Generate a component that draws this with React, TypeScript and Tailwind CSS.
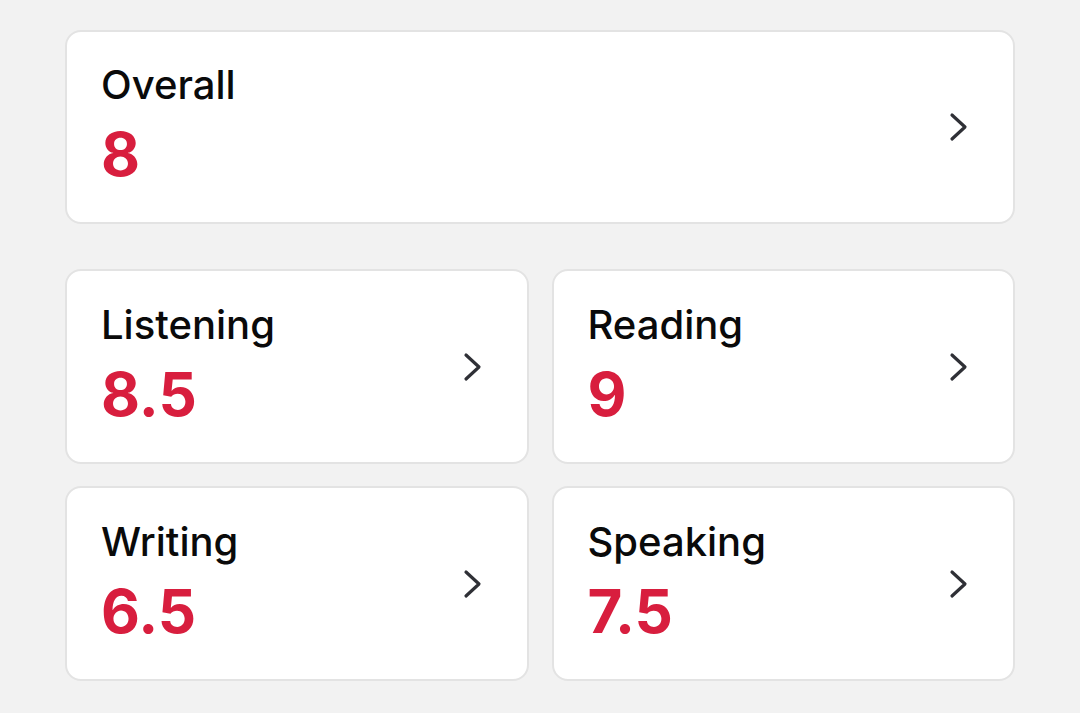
import React from "react";

type Score = { label: string; value: string };

const parts: Score[] = [
  { label: "Listening", value: "8.5" },
  { label: "Reading", value: "9" },
  { label: "Writing", value: "6.5" },
  { label: "Speaking", value: "7.5" },
];

function Chevron() {
  return (
    <svg width="19" height="30" viewBox="0 0 19 30" fill="none" className="shrink-0">
      <polyline
        points="3,3 16,15 3,27"
        stroke="#2f3036"
        strokeWidth="3.2"
        strokeLinecap="round"
        strokeLinejoin="round"
      />
    </svg>
  );
}

function ScoreCard({ label, value, tall }: Score & { tall?: boolean }) {
  return (
    <div
      className={`flex items-center justify-between rounded-[16px] border-2 border-[#e3e3e3] bg-white pl-[34px] pr-[45px] ${
        tall ? "h-[194px]" : "h-[195px]"
      }`}
    >
      <div className="flex flex-col -mt-[8px]">
        <span className="text-[40px] leading-[48px] font-medium text-[#0a0a0a]">{label}</span>
        <span className="mt-[14px] text-[60px] leading-[62px] font-bold text-[#d81e3e]">{value}</span>
      </div>
      <Chevron />
    </div>
  );
}

export default function App() {
  return (
    <div
      className="min-h-screen bg-[#f2f2f2] pt-[30px] pl-[65px] pr-[65px]"
      style={{ fontFamily: "Inter, 'Open Sans', sans-serif" }}
    >
      <ScoreCard label="Overall" value="8" tall />
      <div className="mt-[45px] grid grid-cols-2 gap-x-[23px] gap-y-[22px]">
        {parts.map((p) => (
          <ScoreCard key={p.label} label={p.label} value={p.value} />
        ))}
      </div>
    </div>
  );
}
